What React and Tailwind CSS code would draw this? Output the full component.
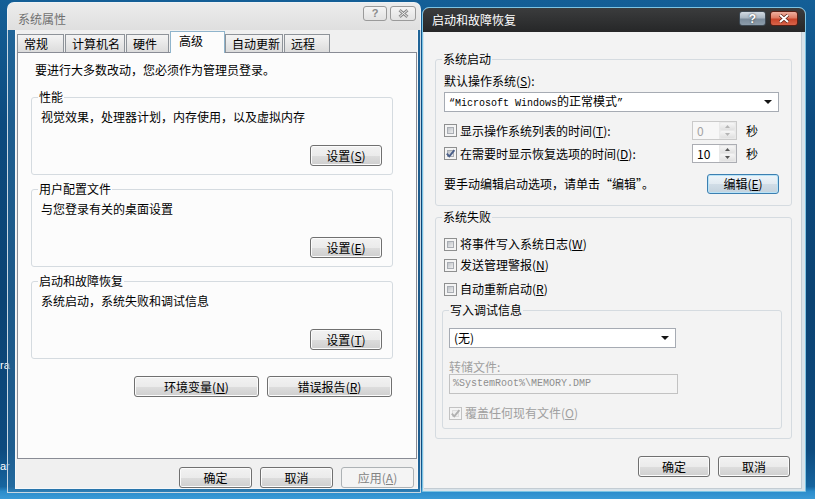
import React from 'react'

const Key = ({ k }) => (
  <>
    (<span className="underline underline-offset-[1px]">{k}</span>)
  </>
)

const Button = ({ children, w = 'w-[72px]', h = 'h-[21px]', kind = 'normal' }) => {
  const looks = {
    normal:
      'border-[#707070] bg-[linear-gradient(#f2f2f2_0%,#ebebeb_50%,#dddddd_51%,#cfcfcf_100%)] shadow-[inset_0_0_0_1px_#fbfbfb] text-black',
    focus:
      'border-[#3c7fb1] bg-[linear-gradient(#eef5fa_0%,#e1eaf1_50%,#d1dde7_51%,#c4d2dd_100%)] shadow-[inset_0_0_0_1px_#b8e3f7] text-black',
    disabled: 'border-[#adb2b5] bg-[#f4f4f4] text-[#838383]',
  }
  return (
    <div className={`flex shrink-0 items-center justify-center rounded-[3px] border ${looks[kind]} ${w} ${h}`}>
      {children}
    </div>
  )
}

const Check = ({ checked, disabled }) => (
  <span
    className={`relative flex h-[13px] w-[13px] shrink-0 items-center justify-center border p-[2px] ${
      disabled ? 'border-[#c2c2c2] bg-[#f4f4f4]' : 'border-[#8e8f8f] bg-[#f4f4f4]'
    }`}
  >
    <span
      className={`block h-full w-full border ${
        disabled
          ? 'border-[#dedede] bg-[#efefef]'
          : 'border-[#a9adb3] bg-[linear-gradient(135deg,#bfc3c8,#eeeeee)]'
      }`}
    />
    {checked && (
      <svg className="absolute left-[0px] top-[0px]" width="11" height="11" viewBox="0 0 11 11">
        <path
          d="M1.8 5.6 4.3 8.4 9.4 2.2"
          fill="none"
          stroke={disabled ? '#b0b0b0' : '#4a5f8a'}
          strokeWidth="1.9"
        />
      </svg>
    )}
  </span>
)

const Select = ({ w, children }) => (
  <div className={`flex h-[20px] items-center border border-[#a6abb3] bg-white pl-[4px] pr-[6px] ${w}`}>
    <div className="flex-1 whitespace-nowrap">{children}</div>
    <svg width="8" height="4" viewBox="0 0 8 4">
      <path d="M0 0h8L4 4z" fill="#151515" />
    </svg>
  </div>
)

const Spin = ({ value, disabled }) => (
  <div
    className={`flex h-[19px] w-[45px] shrink-0 border ${
      disabled ? 'border-[#cacaca] bg-[#f7f7f7] text-[#a3a3a3]' : 'border-[#abadb3] bg-white text-black'
    }`}
  >
    <div className="flex flex-1 items-center pl-[4px]">{value}</div>
    <div className="flex w-[17px] flex-col gap-[1px] bg-[#e9e9e9] p-[1px]">
      <div className="flex flex-1 items-center justify-center rounded-[2px] bg-[linear-gradient(#f6f6f6,#e0e0e0)]">
        <svg width="5" height="3" viewBox="0 0 5 3">
          <path d="M0 3h5L2.5 0z" fill={disabled ? '#b5b5b5' : '#555'} />
        </svg>
      </div>
      <div className="flex flex-1 items-center justify-center rounded-[2px] bg-[linear-gradient(#f6f6f6,#e0e0e0)]">
        <svg width="5" height="3" viewBox="0 0 5 3">
          <path d="M0 0h5L2.5 3z" fill={disabled ? '#b5b5b5' : '#555'} />
        </svg>
      </div>
    </div>
  </div>
)

const Group = ({ title, legend, className = '', children }) => (
  <fieldset className={`rounded-[3px] border border-[#d5dbe0] ${className}`}>
    <legend className={legend}>{title}</legend>
    {children}
  </fieldset>
)

const tabs = [
  { label: '常规', cls: 'w-[47px] ml-0' },
  { label: '计算机名', cls: 'w-[60px] ml-[1px]' },
  { label: '硬件', cls: 'w-[43px] ml-[1px]' },
  { label: '高级', cls: 'w-[55px] ml-[1px]', active: true },
  { label: '自动更新', cls: 'w-[58px] ml-0' },
  { label: '远程', cls: 'w-[46px] ml-[1px]' },
]

const perfGroups = [
  { title: '性能', text: '视觉效果，处理器计划，内存使用，以及虚拟内存', k: 'S' },
  { title: '用户配置文件', text: '与您登录有关的桌面设置', k: 'E' },
  { title: '启动和故障恢复', text: '系统启动，系统失败和调试信息', k: 'T' },
]

const SystemProperties = () => (
  <div className="absolute left-[7px] top-[2px] flex h-[490px] w-[414px] flex-col">
    {/* title bar, inactive */}
    <div className="flex h-[28px] shrink-0 items-start rounded-t-[7px] border border-b-0 border-[#eef2f5] bg-[linear-gradient(#ececec,#dfdfdf)] pl-[10px] pr-[4px] pt-[3px]">
      <span className="mt-[6px] text-[#707070]">系统属性</span>
      <div className="ml-auto flex gap-[3px]">
        <div className="flex h-[15px] w-[24px] items-center justify-center rounded-[3px] border border-[#9a9a9a] bg-[linear-gradient(#f4f4f4,#e2e2e2)] text-[11px] leading-[11px] font-bold text-[#8a8a8a] font-['Liberation_Sans',sans-serif]">
          ?
        </div>
        <div className="flex h-[15px] w-[26px] items-center justify-center rounded-[3px] border border-[#9a9a9a] bg-[linear-gradient(#f4f4f4,#e2e2e2)]">
          <svg width="11" height="9" viewBox="0 0 11 9">
            <path d="M1.5 1.2 9.5 7.8M9.5 1.2 1.5 7.8" stroke="#8a8a8a" strokeWidth="3" />
            <path d="M1.5 1.2 9.5 7.8M9.5 1.2 1.5 7.8" stroke="#f2f2f2" strokeWidth="1" />
          </svg>
        </div>
      </div>
    </div>

    {/* glass frame + client */}
    <div className="flex flex-1 flex-col border-x border-b border-[#c9d7e2] bg-[#2f6f9f]/50 pb-[3px] pl-[7px] pr-[2px]">
      <div className="flex flex-1 flex-col border-l border-r border-b border-[#f6f8fa] bg-[#f0f0f0]">
        {/* tabs */}
        <div className="flex h-[22px] shrink-0 items-end pl-[1px]">
          {tabs.map((t) =>
            t.active ? (
              <div
                key={t.label}
                className={`relative z-10 -mb-[1px] flex h-[22px] items-center border border-b-0 border-[#8fb4cc] bg-[#fcfcfc] pb-[3px] pl-[8px] ${t.cls}`}
              >
                {t.label}
              </div>
            ) : (
              <div
                key={t.label}
                className={`flex h-[18px] items-center border border-b-0 border-[#8e9399] bg-[linear-gradient(#f4f4f4,#dcdcdc)] pl-[6px] ${t.cls}`}
              >
                {t.label}
              </div>
            )
          )}
        </div>

        {/* tab panel */}
        <div className="ml-[1px] flex h-[407px] w-[400px] flex-col border border-[#898c95] bg-[#fcfcfc] pl-[13px] pt-[10px]">
          <div className="ml-[4px]">要进行大多数改动，您必须作为管理员登录。</div>

          {perfGroups.map((g, i) => (
            <Group
              key={g.title}
              title={g.title}
              legend="ml-[-3px] px-[1px]"
              className={`w-[362px] pb-[8px] pl-[9px] pr-[10px] ${i === 0 ? 'mt-[13px]' : 'mt-[7px]'}`}
            >
              <div className="pt-[6px]">{g.text}</div>
              <div className="mt-[21px] flex justify-end">
                <Button w="w-[72px]">
                  设置<Key k={g.k} />
                </Button>
              </div>
            </Group>
          ))}

          <div className="mt-[17px] flex w-[362px] justify-end gap-[8px] pr-[1px]">
            <Button w="w-[125px]">
              环境变量<Key k="N" />
            </Button>
            <Button w="w-[125px]">
              错误报告<Key k="R" />
            </Button>
          </div>
        </div>

        {/* dialog buttons */}
        <div className="mt-[8px] flex justify-end gap-[8px] pr-[3px]">
          <Button w="w-[73px]">确定</Button>
          <Button w="w-[73px]">取消</Button>
          <Button w="w-[73px]" kind="disabled">
            应用<Key k="A" />
          </Button>
        </div>
      </div>
    </div>
  </div>
)

const StartupRecovery = () => (
  <div className="absolute left-[422px] top-[7px] flex h-[485px] w-[384px] flex-col overflow-hidden rounded-t-[7px] border border-[#7cc4e4] bg-[#d8e3ea]">
    {/* title bar, active */}
    <div className="flex h-[24px] shrink-0 items-start bg-[linear-gradient(#3b3c3d,#262728)] pl-[9px] pr-[7px] pt-[3px]">
      <span className="mt-[2px] text-white">启动和故障恢复</span>
      <div className="ml-auto flex gap-[4px]">
        <div className="flex h-[15px] w-[27px] items-center justify-center rounded-[3px] border border-[#3e4953] bg-[linear-gradient(#d2dae2_0%,#a9b6c2_45%,#7a8b9b_55%,#8d9dab_100%)] text-[12px] leading-[12px] font-bold text-white font-['Liberation_Sans',sans-serif] [text-shadow:0_0_2px_#222]">
          ?
        </div>
        <div className="flex h-[15px] w-[28px] items-center justify-center rounded-[3px] border border-[#5a1f14] bg-[linear-gradient(#eeb0a0_0%,#de7a62_45%,#c9442a_55%,#d8644a_100%)]">
          <svg width="12" height="9" viewBox="0 0 12 9">
            <path d="M2 1 10 8M10 1 2 8" stroke="#5a2116" strokeWidth="3.4" />
            <path d="M2 1 10 8M10 1 2 8" stroke="#ffffff" strokeWidth="2" />
          </svg>
        </div>
      </div>
    </div>

    {/* client */}
    <div className="mb-[2px] ml-[1px] mr-[3px] flex flex-1 flex-col border-r border-b border-[#c3ccd3] bg-[#f3f3f3] pl-[11px] pt-[20px]">
      <Group title="系统启动" legend="ml-[-2px] px-[1px]" className="w-[357px] pb-[11px] pl-[8px] pr-[12px]">
        <div className="pt-[8px]">
          默认操作系统<Key k="S" />:
        </div>
        <div className="mt-[4px]">
          <Select w="w-[335px]">
            <span className="text-[10px] font-['Liberation_Mono',monospace]">“Microsoft Windows</span>
            <span>的正常模式</span>
            <span className="text-[10px] font-['Liberation_Mono',monospace]">”</span>
          </Select>
        </div>
        <div className="mt-[9px] flex h-[19px] items-center">
          <div className="flex w-[248px] items-center">
            <Check />
            <span className="ml-[3px]">
              显示操作系统列表的时间<Key k="T" />:
            </span>
          </div>
          <Spin value="0" disabled />
          <span className="ml-[9px]">秒</span>
        </div>
        <div className="mt-[4px] flex h-[19px] items-center">
          <div className="flex w-[248px] items-center">
            <Check checked />
            <span className="ml-[3px]">
              在需要时显示恢复选项的时间<Key k="D" />:
            </span>
          </div>
          <Spin value="10" />
          <span className="ml-[9px]">秒</span>
        </div>
        <div className="mt-[11px] flex h-[20px] items-center justify-between">
          <span>要手动编辑启动选项，请单击“编辑”。</span>
          <Button w="w-[72px]" h="h-[20px]" kind="focus">
            编辑<Key k="E" />
          </Button>
        </div>
      </Group>

      <Group title="系统失败" legend="ml-[-2px] px-[1px]" className="mt-[4px] w-[357px] pb-[9px] pl-[8px] pr-[9px]">
        <div className="flex items-center pt-[13px]">
          <Check />
          <span className="ml-[3px]">
            将事件写入系统日志<Key k="W" />
          </span>
        </div>
        <div className="mt-[7px] flex items-center">
          <Check />
          <span className="ml-[3px]">
            发送管理警报<Key k="N" />
          </span>
        </div>
        <div className="mt-[10px] flex items-center">
          <Check />
          <span className="ml-[3px]">
            自动重新启动<Key k="R" />
          </span>
        </div>

        <Group title="写入调试信息" legend="ml-0 px-[1px]" className="-ml-[2px] mt-[7px] w-[340px] pb-[8px] pl-[6px]">
          <div className="mt-[11px]">
            <Select w="w-[227px]">(无)</Select>
          </div>
          <div className="mt-[12px] text-[#a0a0a0]">转储文件:</div>
          <div className="flex h-[20px] w-[229px] items-center border border-[#c2c2c2] bg-[#f4f4f4] pl-[3px] text-[10px] text-[#8e8e8e] font-['Liberation_Mono',monospace]">
            %SystemRoot%\MEMORY.DMP
          </div>
          <div className="mt-[12px] flex items-center text-[#a0a0a0]">
            <Check checked disabled />
            <span className="ml-[3px]">
              覆盖任何现有文件<Key k="O" />
            </span>
          </div>
        </Group>
      </Group>

      <div className="mt-[17px] flex w-[357px] justify-end gap-[8px] pr-[2px]">
        <Button w="w-[72px]">确定</Button>
        <Button w="w-[72px]">取消</Button>
      </div>
    </div>
  </div>
)

export default function App() {
  return (
    <div className="relative h-[499px] w-[815px] overflow-hidden bg-[linear-gradient(180deg,#145f97_0%,#0c4a7e_25%,#0b4373_60%,#0d4a7e_90%,#16659f_97.5%,#2b8ccb_98.5%,#3a9ad6_100%)] text-[12px] leading-[14px] text-black font-['Noto_Sans_CJK_SC',sans-serif]">
      {/* desktop icon labels peeking out at the left edge */}
      <span className="absolute left-0 top-[358px] text-[11px] text-white font-['Liberation_Sans',sans-serif]">ra</span>
      <span className="absolute left-0 top-[459px] text-[11px] text-white font-['Liberation_Sans',sans-serif]">ar</span>

      <SystemProperties />
      <StartupRecovery />
    </div>
  )
}
